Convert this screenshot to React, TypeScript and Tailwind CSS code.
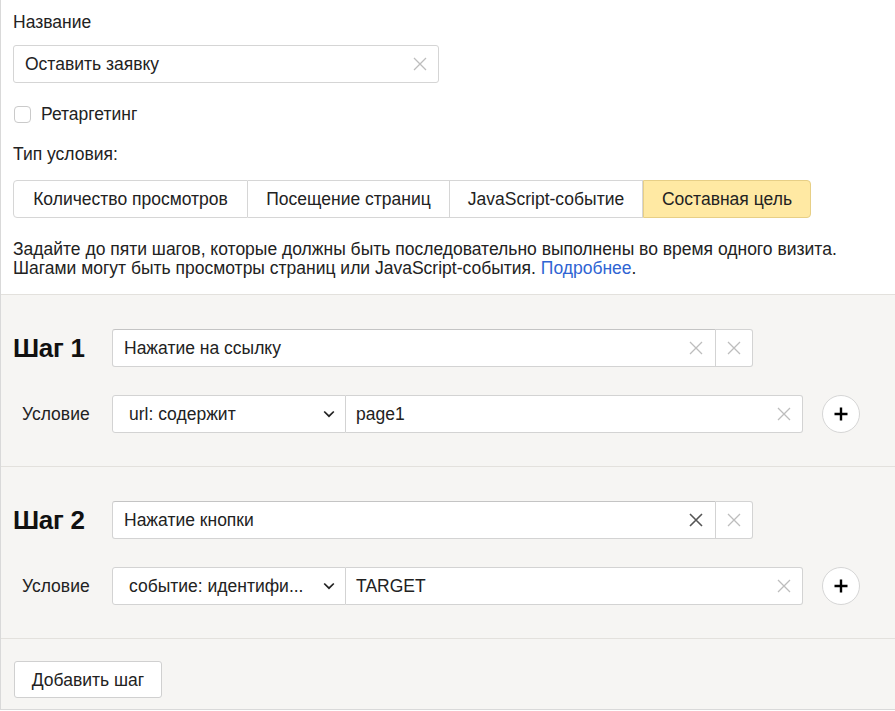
import React from "react";

function Cross({ className = "", size = 14, stroke = 1.3 }: { className?: string; size?: number; stroke?: number }) {
  return (
    <svg width={size} height={size} viewBox="0 0 14 14" className={className} fill="none">
      <path d="M1 1L13 13M13 1L1 13" stroke="currentColor" strokeWidth={stroke} />
    </svg>
  );
}

function Chevron() {
  return (
    <svg width="12" height="8" viewBox="0 0 12 8" fill="none" className="text-[#222]">
      <path d="M1.2 1.5L6 6.2L10.8 1.5" stroke="currentColor" strokeWidth="1.7" />
    </svg>
  );
}

function Plus() {
  return (
    <svg width="14" height="14" viewBox="0 0 14 14" fill="none" className="text-black">
      <path d="M7 0.5V13.5M0.5 7H13.5" stroke="currentColor" strokeWidth="2.4" />
    </svg>
  );
}

interface StepProps {
  index: number;
  title: string;
  condition: string;
  value: string;
  activeClear?: boolean;
}

function Step({ index, title, condition, value, activeClear }: StepProps) {
  return (
    <section className="border-t border-[#e3e1dd] bg-[#f6f5f3] pl-[12px] pt-[34px] pb-[33px]">
      <div className="flex items-center h-[38px]">
        <div className="w-[99px] text-[26px] font-bold leading-none text-[#111] tracking-[-0.3px]">Шаг {index}</div>
        <div className="flex h-[38px]">
          <div className="w-[604px] flex items-center bg-white border border-[#d3d3d3] border-t-[#c4c4c4] rounded-l-[3px] pl-[11px] pr-[12px]">
            <span className="flex-1 truncate">{title}</span>
            {activeClear ? (
              <Cross className="text-[#555]" size={14} stroke={1.6} />
            ) : (
              <Cross className="text-[#bdbdbd]" size={14} />
            )}
          </div>
          <button className="w-[37px] flex items-center justify-center bg-white border border-l-0 border-[#d3d3d3] rounded-r-[3px] text-[#bdbdbd]">
            <Cross size={14} />
          </button>
        </div>
      </div>
      <div className="flex items-center h-[38px] mt-[28px]">
        <div className="w-[99px] pl-[9px] text-[#222]">Условие</div>
        <div className="flex h-[38px]">
          <div className="w-[234px] flex items-center bg-white border border-[#d3d3d3] rounded-l-[3px] pl-[16px] pr-[10px]">
            <span className="flex-1 truncate">{condition}</span>
            <Chevron />
          </div>
          <div className="w-[457px] flex items-center bg-white border border-l-0 border-[#d3d3d3] rounded-r-[3px] pl-[10px] pr-[11px]">
            <span className="flex-1">{value}</span>
            <Cross className="text-[#bdbdbd]" size={14} />
          </div>
        </div>
        <button className="ml-[19px] w-[38px] h-[38px] rounded-full bg-white border border-[#d6d6d6] flex items-center justify-center">
          <Plus />
        </button>
      </div>
    </section>
  );
}

export default function App() {
  const tabs = [
    { label: "Количество просмотров", w: "w-[235px]" },
    { label: "Посещение страниц", w: "w-[202px]" },
    { label: "JavaScript-событие", w: "w-[193px]" },
    { label: "Составная цель", w: "w-[168px]" },
  ];

  return (
    <div className="w-[895px] h-[710px] bg-white border-l border-b border-[#d9d9d9] text-[17.5px] text-[#222] font-['Liberation_Sans',Arial,sans-serif] leading-[20px] overflow-hidden">
      <div className="pl-[12px] pt-[12px] pb-[16px]">
        <div className="h-[20px]">Название</div>
        <div className="mt-[13px] w-[426px] h-[38px] flex items-center border border-[#d5d5d5] rounded-[3px] pl-[11px] pr-[11px]">
          <span className="flex-1">Оставить заявку</span>
          <Cross className="text-[#bdbdbd]" size={14} />
        </div>
        <label className="mt-[21px] h-[20px] flex items-center gap-[10px]">
          <span className="ml-[1px] w-[17px] h-[17px] rounded-[4px] border border-[#cacaca] bg-white" />
          <span>Ретаргетинг</span>
        </label>
        <div className="mt-[20px] h-[20px]">Тип условия:</div>
        <div className="mt-[16px] flex h-[38px]">
          {tabs.map((t, i) => {
            const last = i === tabs.length - 1;
            return (
              <div
                key={t.label}
                className={
                  last
                    ? `${t.w} flex items-center justify-center bg-[#ffe9a3] border border-[#e7cf86] rounded-r-[4px]`
                    : i === 0
                    ? `${t.w} flex items-center justify-center bg-white border border-[#d6d6d6] rounded-l-[4px]`
                    : `${t.w} flex items-center justify-center bg-white border border-l-0 border-[#d6d6d6]`
                }
              >
                {t.label}
              </div>
            );
          })}
        </div>
        <p className="mt-[22px] leading-[19px]">
          Задайте до пяти шагов, которые должны быть последовательно выполнены во время одного визита.
          <br />
          Шагами могут быть просмотры страниц или JavaScript-события.{" "}
          <a className="text-[#2f64d3]">Подробнее</a>.
        </p>
      </div>

      <Step index={1} title="Нажатие на ссылку" condition="url: содержит" value="page1" />
      <Step index={2} title="Нажатие кнопки" condition="событие: идентифи..." value="TARGET" activeClear />

      <div className="border-t border-[#e3e1dd] bg-[#f6f5f3] pl-[13px] pt-[22px] h-full">
        <button className="w-[148px] h-[37px] bg-white border border-[#d0d0d0] rounded-[3px] text-[#222]">
          Добавить шаг
        </button>
      </div>
    </div>
  );
}
